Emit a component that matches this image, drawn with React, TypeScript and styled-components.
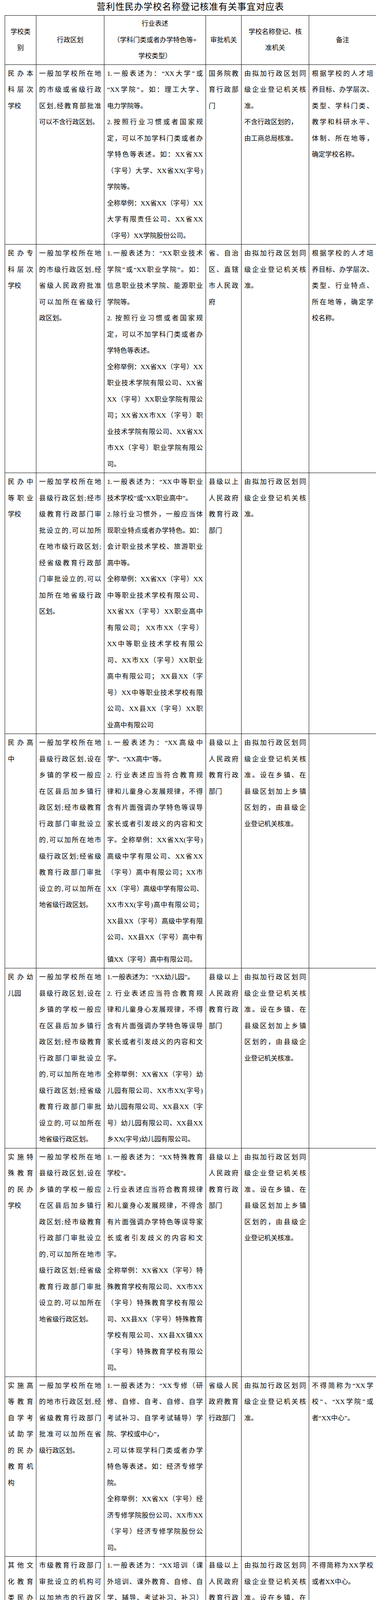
import React from "react"
import styled, { createGlobalStyle } from "styled-components"

// ============================ Styles ============================

const GlobalStyle = createGlobalStyle`
  html, body {
    margin: 0;
    padding: 0;
    background: #ffffff;
  }
  body {
    font-family: "Liberation Serif", "Noto Sans CJK SC", serif;
    color: #000000;
  }
`

const Page = styled.div`
  width: 962px;
  padding: 0 0 0 12px;
  box-sizing: border-box;
`

const Title = styled.h1`
  width: 950px;
  margin: 0 0 3px;
  height: 36px;
  line-height: 36px;
  text-align: center;
  font-size: 23px;
  font-weight: 400;
  letter-spacing: 1px;
`

const Table = styled.table`
  width: 950px;
  border-collapse: collapse;
  table-layout: fixed;
  font-size: 17px;
  line-height: 41.5px;
`

const HeadCell = styled.th`
  border: 1px solid #000;
  height: 124px;
  padding: 0 4px;
  vertical-align: middle;
  text-align: center;
  font-weight: 400;
`

const Cell = styled.td`
  border: 1px solid #000;
  padding: 2px 7px 1px;
  vertical-align: top;
`

const Line = styled.div<{ $justify?: boolean; $gap?: boolean }>`
  white-space: nowrap;
  text-align: ${(p) => (p.$justify ? "justify" : "left")};
  text-align-last: ${(p) => (p.$justify ? "justify" : "auto")};
  margin-top: ${(p) => (p.$gap ? "15px" : "0")};
`

// ============================ Data ============================

// every paragraph is a string, "|" marks where the line breaks,
// a line starting with "+" sits a bit lower than the others
const widths = [80, 174, 260, 91, 173, 172]

const header = [
  ["学校类", "别"],
  ["行政区划"],
  ["行业表述", "（学科门类或者办学特色等+", "学校类型）"],
  ["审批机关"],
  ["学校名称登记、核", "准机关"],
  ["备注"],
]

const countyArea =
  "一般加学校所在地|县级行政区划,设在|乡镇的学校一般应|在区县后加乡镇行|政区划;经市级教育|行政部门审批设立|的,可以加所在地市|级行政区划;经省级|教育行政部门审批|设立的,可以加所在|地省级行政区划。"
const countyGov = "县级以上|人民政府|教育行政|部门"
const sameLevel = "由拟加行政区划同|级企业登记机关核|准。"
const townLevel =
  "由拟加行政区划同|级企业登记机关核|准。设在乡镇、在|县级区划加上乡镇|区划的，由县级企|业登记机关核准。"

const rows: string[][][] = [
  [
    ["民办本|科层次|学校"],
    ["一般加学校所在地|的市级或省级行政|区划,经教育部批准|可以不含行政区划。"],
    [
      "1.一般表述为：“XX大学”或|“XX学院”。如：理工大学、|电力学院等。",
      "2.按照行业习惯或者国家规|定，可以不加学科门类或者办|学特色等表述。如：XX省XX|（字号）大学、XX省XX(字号)|学院等。",
      "全称举例：XX省XX（字号）XX|大学有限责任公司、XX省XX|（字号）XX学院股份公司。",
    ],
    ["国务院教|育行政部|门"],
    [sameLevel, "不含行政区划的，", "由工商总局核准。"],
    ["根据学校的人才培|养目标、办学层次、|类型、学科门类、|教学和科研水平、|体制、所在地等，|确定学校名称。"],
  ],
  [
    ["民办专|科层次|学校"],
    ["一般加学校所在地|的市级行政区划,经|省级人民政府批准|可以加所在省级行|政区划。"],
    [
      "1.一般表述为：“XX职业技术|学院”或“XX职业学院”。如：|信息职业技术学院、能源职业|学院等。",
      "2. 按照行业习惯或者国家规|定，可以不加学科门类或者办|学特色等表述。",
      "全称举例：XX省XX（字号）XX|职业技术学院有限公司、XX省|XX（字号）XX职业学院有限公|司；XX省XX市XX（字号）职|业技术学院有限公司、XX省XX|市XX（字号）职业学院有限公|司。",
    ],
    ["省、自治|区、直辖|市人民政|府"],
    [sameLevel],
    ["根据学校的人才培|养目标、办学层次、|类型、行业特点、|所在地等，确定学|校名称。"],
  ],
  [
    ["民办中|等职业|学校"],
    ["一般加学校所在地|县级行政区划;经市|级教育行政部门审|批设立的,可以加所|在地市级行政区划;|经省级教育行政部|门审批设立的,可以|加所在地省级行政|区划。"],
    [
      "1.一般表述为：“XX中等职业|技术学校”或“XX职业高中”。",
      "2.除行业习惯外，一般应当体|现职业特点或者办学特色。如：|会计职业技术学校、旅游职业|高中等。",
      "全称举例：XX省XX（字号）XX|中等职业技术学校有限公司、|XX省XX（字号）XX职业高中|有限公司； XX市XX（字号）|XX中等职业技术学校有限公|司、XX市XX（字号）XX职业|高中有限公司； XX县XX（字|号）XX中等职业技术学校有限|公司、XX县XX（字号）XX职|业高中有限公司",
    ],
    [countyGov],
    [sameLevel],
    [],
  ],
  [
    ["民办高|中"],
    [countyArea],
    [
      "1.一般表述为：“XX高级中|学”、“XX高中”等。",
      "2. 行业表述应当符合教育规|律和儿童身心发展规律，不得|含有片面强调办学特色等误导|家长或者引发歧义的内容和文|字。全称举例：XX省XX(字号)|高级中学有限公司、XX省XX|（字号）高中有限公司；XX市|XX（字号）高级中学有限公司、|XX市XX(字号)高中有限公司；|XX县XX（字号）高级中学有限|公司、XX县XX（字号）高中有|+镇XX（字号）高中有限公司。",
    ],
    [countyGov],
    [townLevel],
    [],
  ],
  [
    ["民办幼|儿园"],
    [countyArea],
    [
      "1.一般表述为：“XX幼儿园”。",
      "2. 行业表述应当符合教育规|律和儿童身心发展规律，不得|含有片面强调办学特色等误导|家长或者引发歧义的内容和文|字。",
      "全称举例：XX省XX（字号）幼|儿园有限公司、XX市XX(字号)|幼儿园有限公司、XX县XX（字|号）幼儿园有限公司、XX县XX|乡XX(字号)幼儿园有限公司。",
    ],
    [countyGov],
    [townLevel],
    [],
  ],
  [
    ["实施特|殊教育|的民办|学校"],
    [countyArea],
    [
      "1.一般表述为：“XX特殊教育|学校”。",
      "2.行业表述应当符合教育规律|和儿童身心发展规律，不得含|有片面强调办学特色等误导家|长或者引发歧义的内容和文|字。",
      "全称举例：XX省XX（字号）特|殊教育学校有限公司、XX市XX|（字号）特殊教育学校有限公|司、XX县XX（字号）特殊教育|学校有限公司、XX县XX镇XX|（字号）特殊教育学校有限公|司。",
    ],
    [countyGov],
    [townLevel],
    [],
  ],
  [
    ["实施高|等教育|自学考|试助学|的民办|教育机|构"],
    ["一般加学校所在地|的地市行政区划,经|省级教育行政部门|批准可以加所在省|级行政区划。"],
    [
      "1.一般表述为：“XX专修（研|修、自修、自考、自修、自学|考试补习、自学考试辅导）学|院、学校或中心”，",
      "2.可以体现学科门类或者办学|特色等表述。如：经济专修学|院。",
      "全称举例：XX省XX（字号）经|济专修学院股份公司、XX市XX|（字号）经济专修学院股份公|司。",
    ],
    ["省级人民|政府教育|行政部门"],
    [sameLevel],
    ["不得简称为“XX学|校”、“XX学院”或|者“XX中心”。"],
  ],
  [
    ["其他文|化教育|类民办|教育机|构"],
    ["市级教育行政部门|审批设立的机构可|以加地市的行政区|划;县级教育行政部|门审批设立的机构|可以加区县行政区|划,设在乡镇的机构|一般应在区县后加|乡镇行政区划。"],
    [
      "1.一般表述为：“XX培训（课|外培训、课外教育、自修、自|学、辅导、考试补习、补习）|学校或中心”。",
      "2.可以体现学科门类或者办学|特色等表述。如：英语培训学|校。",
      "全称举例：XX市XX（字号）培|训学校有限公司、XX县XX（字|号）辅导学校有限公司、XX县|XX镇XX（字号）培训学校有限|公司。",
    ],
    [countyGov],
    [townLevel],
    ["不得简称为XX学校|或者XX中心。"],
  ],
]

// ============================ Components ============================

const Paragraph = ({ text }: { text: string }) => {
  const lines = text.split("|")
  return (
    <>
      {lines.map((raw, i) => {
        const gap = raw.startsWith("+")
        const line = gap ? raw.slice(1) : raw
        return (
          <Line key={i} $justify={i < lines.length - 1} $gap={gap}>
            {line}
          </Line>
        )
      })}
    </>
  )
}

export default function App() {
  return (
    <Page>
      <GlobalStyle />
      <Title>营利性民办学校名称登记核准有关事宜对应表</Title>
      <Table>
        <colgroup>
          {widths.map((w, i) => (
            <col key={i} style={{ width: w }} />
          ))}
        </colgroup>
        <thead>
          <tr>
            {header.map((lines, i) => (
              <HeadCell key={i}>
                {lines.map((l, j) => (
                  <div key={j}>{l}</div>
                ))}
              </HeadCell>
            ))}
          </tr>
        </thead>
        <tbody>
          {rows.map((row, r) => (
            <tr key={r}>
              {row.map((paras, c) => (
                <Cell key={c}>
                  {paras.map((p, k) => (
                    <Paragraph key={k} text={p} />
                  ))}
                </Cell>
              ))}
            </tr>
          ))}
        </tbody>
      </Table>
    </Page>
  )
}
